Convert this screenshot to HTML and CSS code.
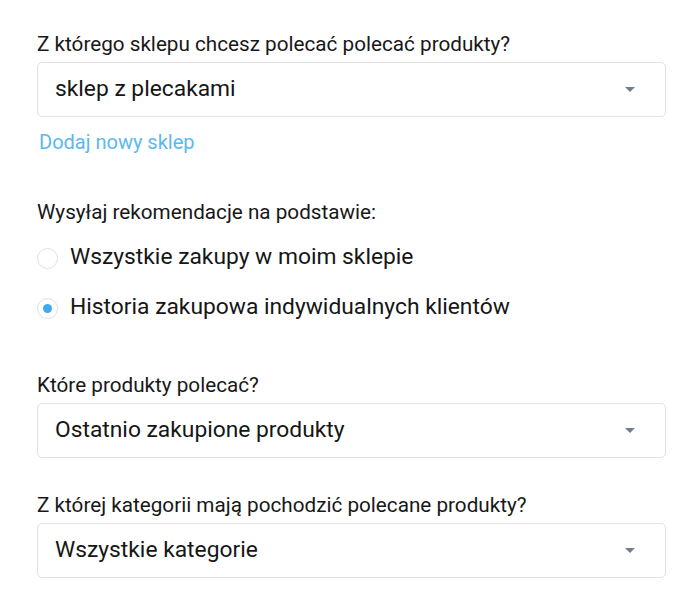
FILE: index.html
```html
<!DOCTYPE html>
<html lang="pl">
<head>
<meta charset="utf-8">
<link rel="stylesheet" href="styles.css">
</head>
<body>
<div class="form">
  <div class="field">
    <div class="label">Z którego sklepu chcesz polecać polecać produkty?</div>
    <div class="select"><span>sklep z plecakami</span><span class="caret"></span></div>
    <a class="link" href="#">Dodaj nowy sklep</a>
  </div>
  <div class="field radios-field">
    <div class="label">Wysyłaj rekomendacje na podstawie:</div>
    <div class="radios">
      <div class="radio"><span class="dot"></span><span>Wszystkie zakupy w moim sklepie</span></div>
      <div class="radio"><span class="dot checked"></span><span>Historia zakupowa indywidualnych klientów</span></div>
    </div>
  </div>
  <div class="field third">
    <div class="label">Które produkty polecać?</div>
    <div class="select"><span>Ostatnio zakupione produkty</span><span class="caret"></span></div>
  </div>
  <div class="field fourth">
    <div class="label">Z której kategorii mają pochodzić polecane produkty?</div>
    <div class="select"><span>Wszystkie kategorie</span><span class="caret"></span></div>
  </div>
</div>
</body>
</html>
```

FILE: styles.css
```css
html, body { margin: 0; padding: 0; background: #fff; }
body { font-family: Roboto, "Noto Sans", sans-serif; color: #161616; }
.form { padding: 31px 34px 0 37px; display: flex; flex-direction: column; }
.label { font-size: 20.7px; line-height: 26px; color: #181818; }
.select {
  margin-top: 5px;
  height: 55px;
  box-sizing: border-box;
  border: 1.5px solid #e2e2e2;
  border-radius: 5px;
  display: flex; align-items: center; justify-content: space-between;
  padding: 0 30px 3px 17px;
  font-size: 22.8px;
  color: #161616;
}
.caret {
  width: 0; height: 0;
  margin-top: 3px;
  border-left: 5px solid transparent;
  border-right: 5px solid transparent;
  border-top: 5px solid #6f7f8d;
}
.link { display: block; margin-top: 12px; margin-left: 2px; font-size: 20px; color: #5cb8f2; text-decoration: none; line-height: 26px; }
.radios-field { margin-top: 44px; }
.radios { display: flex; flex-direction: column; gap: 24px; margin-top: 20px; }
.radio { display: flex; align-items: center; gap: 12px; font-size: 22.8px; height: 26px; }
.radio span:last-child { margin-top: -3px; }
.dot {
  width: 21px; height: 21px; box-sizing: border-box;
  border: 1.5px solid #e0e0e0; border-radius: 50%;
  display: flex; align-items: center; justify-content: center;
}
.dot.checked::after { content: ""; width: 9px; height: 9px; border-radius: 50%; background: #42a8f5; }
.third { margin-top: 51px; }
.fourth { margin-top: 34px; }
```
